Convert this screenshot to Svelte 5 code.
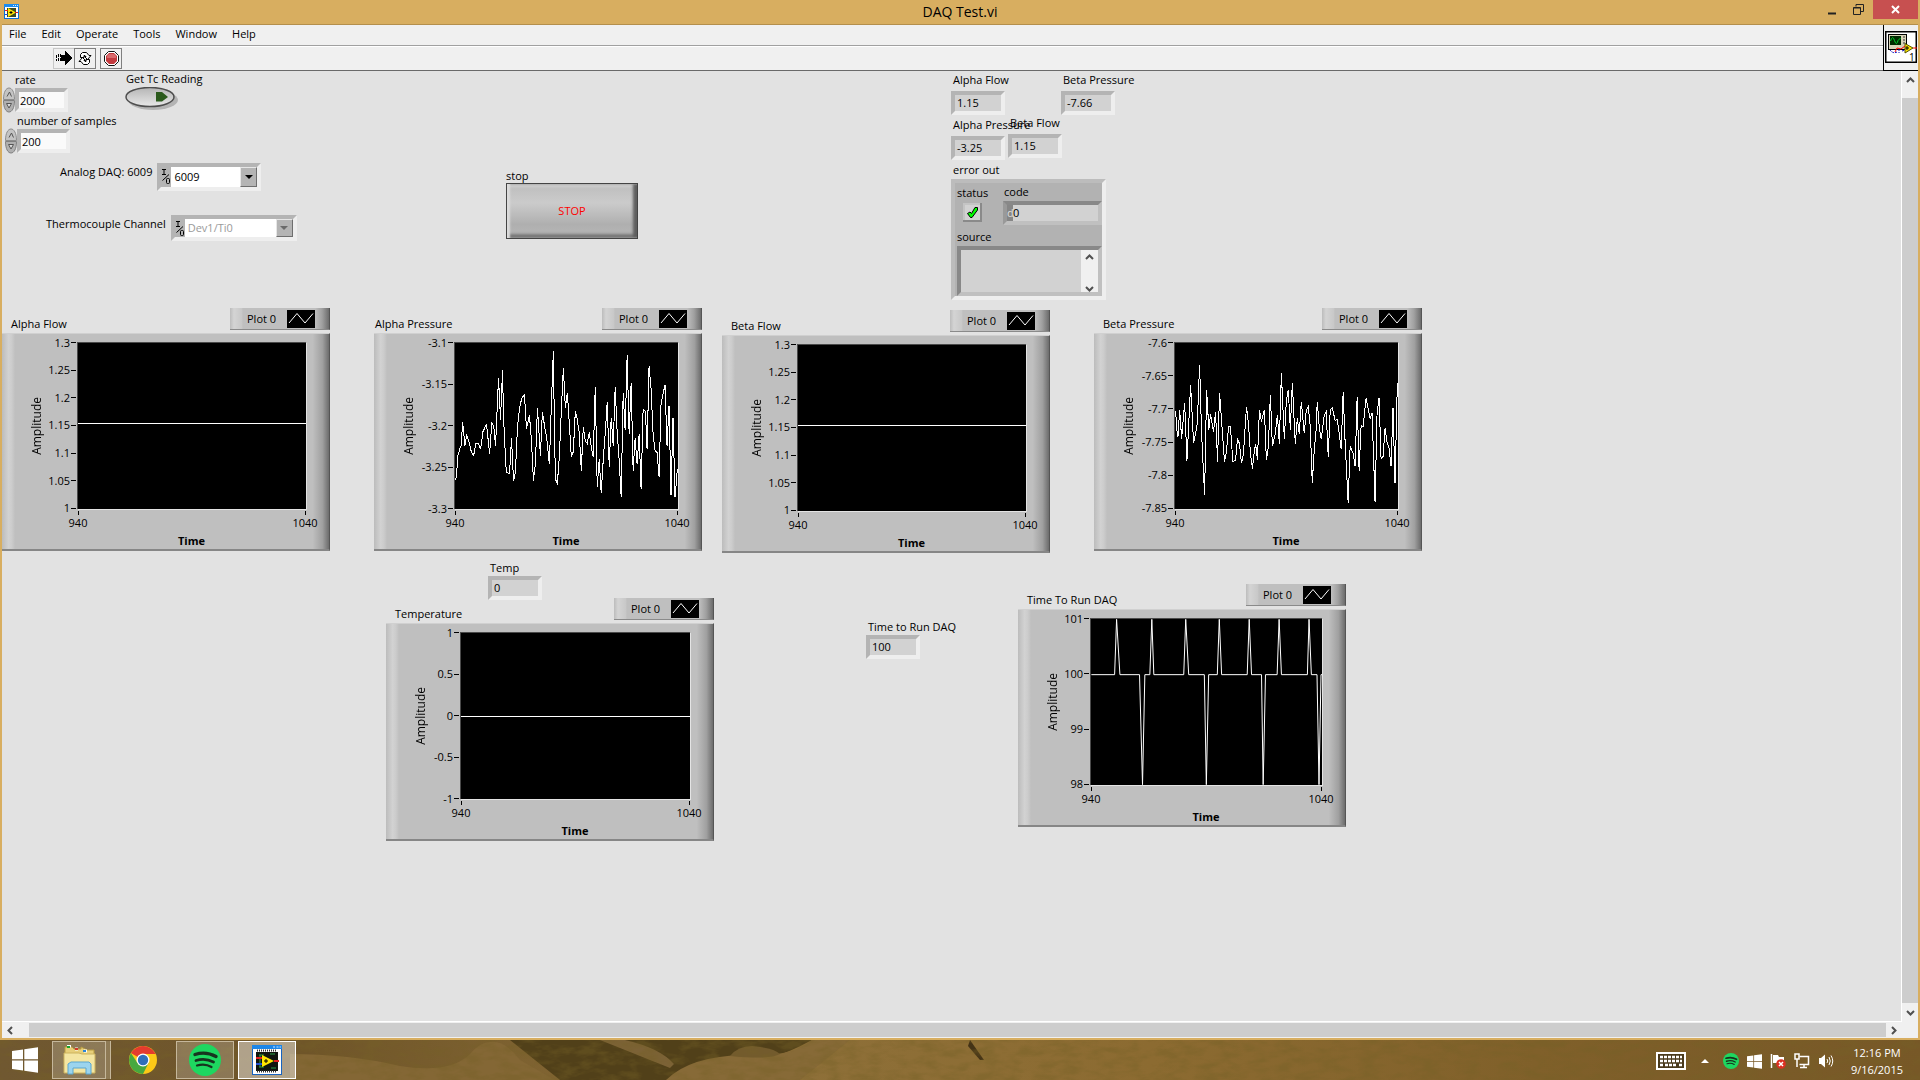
<script>
    const menus = ["File", "Edit", "Operate", "Tools", "Window", "Help"];

    let rate = "2000";
    let samples = "200";
    let analog = "6009";
    let thermocouple = "Dev1/Ti0";

    // positions are front panel coordinates
    const indicators = [
        { id: "alphaFlow", name: "Alpha Flow", value: "1.15", x: 949, y: 1 },
        { id: "betaPressure", name: "Beta Pressure", value: "-7.66", x: 1059, y: 1 },
        { id: "alphaPressure", name: "Alpha Pressure", value: "-3.25", x: 949, y: 46 },
        { id: "betaFlow", name: "Beta Flow", value: "1.15", x: 1006, y: 44 },
        { id: "temp", name: "Temp", value: "0", x: 486, y: 489, tight: true },
        { id: "timeToRun", name: "Time to Run DAQ", value: "100", x: 864, y: 548, tight: true }
    ];

    const flat = "0,243 684,243";

    const alphaPressure = "256,542 259,520 263,465 269,445 272,440 277,367 284,437 289,403 296,425 303,455 310,467 317,430 325,430 331,448 338,395 344,382 349,373 358,461 365,367 371,382 376,437 385,232 391,358 397,208 400,350 404,430 406,490 410,518 418,522 424,415 430,542 434,530 437,490 442,380 448,325 455,293 463,283 469,385 478,346 484,420 490,542 496,490 502,322 511,467 517,334 523,375 530,415 538,493 544,310 550,151 552,300 556,538 562,550 568,470 574,330 580,202 586,322 592,277 598,370 604,472 610,455 616,334 622,358 628,400 634,512 640,380 646,422 652,430 658,397 664,440 670,472 676,259 682,562 688,478 694,580 700,480 706,400 712,304 718,500 724,353 730,437 736,259 742,400 748,480 754,592 760,277 766,391 772,163 778,403 784,247 790,512 796,415 802,493 808,403 814,569 820,328 827,334 832,448 838,196 844,265 850,400 856,452 862,457 868,530 874,310 880,280 886,254 892,437 898,316 904,586 910,352 916,592 919,560 923,508";

    const betaPressure = "256,331 259,385 263,410 268,328 274,416 283,307 290,482 301,253 310,430 316,400 321,370 328,193 334,400 343,586 349,268 356,388 361,343 370,394 376,334 382,485 388,277 394,360 403,485 409,455 415,380 421,380 428,485 436,481 442,418 448,430 454,490 460,460 469,319 475,370 481,460 487,506 493,450 497,433 502,481 508,328 514,364 523,328 529,481 535,440 541,283 547,439 556,400 562,343 568,433 574,217 580,350 583,416 589,300 595,268 601,388 607,247 616,433 622,355 628,403 634,304 643,400 649,330 655,319 661,380 667,550 673,450 678,400 682,304 688,380 694,418 703,345 709,334 715,470 721,330 727,322 736,361 742,358 748,400 754,448 760,274 766,430 775,610 781,439 790,460 796,499 802,290 808,512 814,376 820,379 829,292 835,325 841,355 847,337 856,607 862,340 868,292 874,475 880,470 886,385 892,425 898,445 904,499 910,322 916,550 920,380 923,247";

    const runTime = "243,313 313,313 319,146 329,313 388,313 397,645 404,313 419,313 425,146 431,313 521,313 527,146 536,313 583,313 589,645 596,313 622,313 628,146 635,313 712,313 718,146 725,313 755,313 760,645 767,313 802,313 808,146 815,313 893,313 898,146 905,313 922,313 928,645 934,313 937,313";

    const charts = [
        { name: "Alpha Flow", x: 0, y: 237, inset: 9, left: 75, width: 229, ticks: ["1.3", "1.25", "1.2", "1.15", "1.1", "1.05", "1"], box: "0 0 684 501", points: flat },
        { name: "Alpha Pressure", x: 372, y: 237, inset: 1, left: 80, width: 224, ticks: ["-3.1", "-3.15", "-3.2", "-3.25", "-3.3"], box: "254 127 671 501", points: alphaPressure },
        { name: "Beta Flow", x: 720, y: 239, inset: 9, left: 75, width: 229, ticks: ["1.3", "1.25", "1.2", "1.15", "1.1", "1.05", "1"], box: "0 0 684 501", points: flat },
        { name: "Beta Pressure", x: 1092, y: 237, inset: 9, left: 80, width: 224, ticks: ["-7.6", "-7.65", "-7.7", "-7.75", "-7.8", "-7.85"], box: "254 127 671 501", points: betaPressure },
        { name: "Temperature", x: 384, y: 527, inset: 9, left: 74, width: 230, ticks: ["1", "0.5", "0", "-0.5", "-1"], box: "0 0 690 501", points: "0,252 690,252" },
        { name: "Time To Run DAQ", x: 1016, y: 513, inset: 9, left: 72, width: 232, ticks: ["101", "100", "99", "98"], box: "242 145 695 501", points: runTime }
    ];
</script>

{#snippet up()}
    <svg width="9" height="6" viewBox="0 0 9 6"><path d="M1 5 L4.5 1.5 L8 5" fill="none" stroke="#505050" stroke-width="2" /></svg>
{/snippet}

{#snippet down()}
    <svg width="9" height="6" viewBox="0 0 9 6"><path d="M1 1 L4.5 4.5 L8 1" fill="none" stroke="#505050" stroke-width="2" /></svg>
{/snippet}

{#snippet spinner()}
    <svg class="spin" width="12" height="26" viewBox="0 0 12 26">
        <path d="M0.5 12.5 C0.5 5 3 1 6 1 S11.5 5 11.5 12.5 Z" fill="#c4c4c4" stroke="#8d8d8d" />
        <path d="M0.5 13.5 C0.5 21 3 25 6 25 S11.5 21 11.5 13.5 Z" fill="#b0b0b0" stroke="#808080" />
        <path d="M4 9.5 L6.5 5 L8.5 9.5" fill="none" stroke="#555" />
        <path d="M3.5 16.5 H8.5 L6 21 Z" fill="#ddd" stroke="#555" />
    </svg>
{/snippet}

{#snippet io()}
    <svg class="io" width="10" height="20" viewBox="0 0 10 20">
        <path d="M1 2.5 H5 M3 2.5 V7.5 M1 7.5 H5 M1.5 13.5 L8 7.5" fill="none" stroke="#000" />
        <rect x="5.5" y="11.5" width="3" height="5" rx="1" fill="none" stroke="#000" />
    </svg>
{/snippet}

{#snippet spotify(size)}
    <svg width={size} height={size} viewBox="0 0 32 32">
        <circle cx="16" cy="16" r="16" fill="#1ed760" />
        <path d="M6 10.500 Q17 7 27 12.500" fill="none" stroke="#17331f" stroke-width="3.400" stroke-linecap="round" />
        <path d="M7 16.500 Q16 13.500 24.500 18" fill="none" stroke="#17331f" stroke-width="2.800" stroke-linecap="round" />
        <path d="M8 21.500 Q16 19 22.500 23" fill="none" stroke="#17331f" stroke-width="2.200" stroke-linecap="round" />
    </svg>
{/snippet}

{#snippet windows(size)}
    <svg width={size} height={size} viewBox="0 0 26 26">
        <path d="M0 4 L11 2.500 V12.300 H0 Z M12.300 2.300 L26 0.300 V12.300 H12.300 Z M0 13.500 H11 V23.500 L0 22 Z M12.300 13.500 H26 V25.700 L12.300 23.700 Z" fill="#fff" />
    </svg>
{/snippet}

{#snippet labview(size)}
    <svg width={size} height={size} viewBox="0 0 30 30">
        <rect x="0.500" y="0.500" width="29" height="29" fill="#fff" stroke="#1763c0" />
        <rect x="0" y="0" width="30" height="4" fill="#1c86e8" />
        <path d="M21 2 H23 M24.500 2 H26.500 M27.500 2 H29" stroke="#cfe6ff" />
        <rect x="4" y="7" width="22" height="19" fill="#10150f" />
        <path d="M5 5.500 H25 M5 26.500 H25" stroke="#333" stroke-width="2" stroke-dasharray="1 1" />
        <path d="M7 10 H12 M18 9 H23 M7 22 H12 M19 23 H24 M8 10 V22" fill="none" stroke="#2aa148" />
        <path d="M10 10 L22 16 L10 22 Z" fill="#ffe500" />
        <path d="M14 14 V18 M12 16 H16" stroke="#000" />
        <path d="M4 13 H10 M22 16 H27" stroke="#e02020" stroke-width="2" />
        <path d="M4 19 H10" stroke="#2050d0" stroke-width="2" />
    </svg>
{/snippet}

<!-- title bar size, where the diagram symbol fills the whole icon -->
{#snippet viIcon()}
    <svg width="15" height="15" viewBox="0 0 15 15">
        <rect x="0.500" y="0.500" width="14" height="14" fill="#fff" stroke="#0a6fd6" />
        <rect width="15" height="3" fill="#1a8cf0" />
        <path d="M9 1.500 H14" stroke="#d6ecff" stroke-dasharray="1 1" />
        <rect x="3" y="4" width="9" height="9" fill="#3a4a22" />
        <path d="M4 4 L12 8.500 L4 13 Z" fill="#ffe500" />
        <path d="M7 7 V10 M5.500 8.500 H8.500" stroke="#000" />
        <path d="M1 6.500 H4 M11 8.500 H14" stroke="#e02020" />
        <path d="M1 10.500 H4" stroke="#2050d0" />
    </svg>
{/snippet}

<div class="desktop">
    <div class="window">
        <header class="title">
            <span class="appicon">{@render viIcon()}</span>
            <h1>DAQ Test.vi</h1>
            <div class="winbtns">
                <button aria-label="Minimize"><svg width="10" height="12" viewBox="0 0 10 12"><path d="M1 9.500 H9" stroke="#222" stroke-width="2" /></svg></button>
                <button aria-label="Restore"><svg width="11" height="11" viewBox="0 0 11 11"><path d="M3 2.500 V0.500 H10.500 V7.500 H8" fill="none" stroke="#222" /><path d="M0.500 3.500 H7.500 V10.500 H0.500 Z M0.500 4 H7.500" fill="none" stroke="#222" /></svg></button>
                <button class="close" aria-label="Close"><svg width="9" height="9" viewBox="0 0 9 9"><path d="M1 1 L8 8 M8 1 L1 8" stroke="#fff" stroke-width="2" /></svg></button>
            </div>
        </header>

        <div class="body">
            <div class="top">
                <div class="bars">
                    <nav class="menu">
                        {#each menus as m}<button>{m}</button>{/each}
                    </nav>
                    <div class="tools">
                        <button class="run" aria-label="Run">
                            <svg width="16" height="14" viewBox="0 0 16 14" shape-rendering="crispEdges"><path d="M0.500 4 V10 M2.500 3 V11 M4.500 3 V11" stroke="#000" stroke-dasharray="3 1" /><path d="M5 4 H9 V0 L16 7 L9 14 V10 H5 Z" fill="#000" /></svg>
                        </button>
                        <button aria-label="Run continuously">
                            <svg width="16" height="15" viewBox="0 0 16 15">
                                <path d="M3.500 6.500 V3.500 L5.500 1.500 H9.500 L12 4.500 H14 L10.500 8.500 L7.500 5.500 H9 L8 4.500 H7 V6.500 Z" fill="#fff" stroke="#000" />
                                <path d="M3.500 6.500 V3.500 L5.500 1.500 H9.500 L12 4.500 H14 L10.500 8.500 L7.500 5.500 H9 L8 4.500 H7 V6.500 Z" fill="#fff" stroke="#000" transform="rotate(180 8 7.500)" />
                            </svg>
                        </button>
                        <button class="abort" aria-label="Abort execution">
                            <svg width="15" height="15" viewBox="0 0 15 15"><path d="M4.500 0.500 H10.500 L14.500 4.500 V10.500 L10.500 14.500 H4.500 L0.500 10.500 V4.500 Z" fill="#fff" stroke="#111" /><path d="M5 2 H10 L13 5 V10 L10 13 H5 L2 10 V5 Z" fill="#c33a3f" /><path d="M5 3 H10 L12 5 V7 H3 V5 Z" fill="#d9696c" /></svg>
                        </button>
                    </div>
                </div>
                <div class="pane">
                    <svg width="32" height="32" viewBox="0 0 32 32">
                        <rect x="0.500" y="0.500" width="31" height="31" fill="#fff" stroke="#000" stroke-width="2" />
                        <rect x="3.500" y="3.500" width="18" height="15" fill="#d8d4b8" stroke="#000" />
                        <rect x="5" y="5" width="11" height="9" fill="#002b00" />
                        <path d="M5.500 10 Q7.500 3.500 9.500 9.500 T13 9.500 L15.500 7" fill="none" stroke="#00d02a" />
                        <path d="M18 6 H20 M18 9 H20 M18 12 H20" stroke="#333" />
                        <path d="M20 12.500 L28 17 L20 22 Z" fill="#ffe600" stroke="#555500" />
                        <path d="M22 15 V19 M20.500 17 H24" stroke="#000" />
                        <path d="M5 19 Q8 23 12 21 M14 18 V22 M17 20 L20 19" fill="none" stroke="#1010c0" stroke-dasharray="2 1" />
                        <path d="M10 21 L12 17 L16 18 L20 15 M28 17 H32" fill="none" stroke="#f00" />
                        <text x="24" y="30" font-size="10">1</text>
                    </svg>
                </div>
            </div>

            <div class="view">
                <main class="panel">
                    <div class="item num" style="left: 1px; top: 1px">
                        <label for="rate">rate</label>
                        <div class="row">{@render spinner()}<input id="rate" class="sunk" bind:value={rate} /></div>
                    </div>
                    <div class="item num" style="left: 3px; top: 42px">
                        <label for="samples">number of samples</label>
                        <div class="row">{@render spinner()}<input id="samples" class="sunk" bind:value={samples} /></div>
                    </div>

                    <div class="item" style="left: 122px; top: 0px">
                        <label for="getTc">Get Tc Reading</label>
                        <button id="getTc" class="oval">
                            <svg width="54" height="24" viewBox="0 0 54 24">
                                <defs><linearGradient id="ov" x2="0" y2="1"><stop offset="0" stop-color="#b5b5b5" /><stop offset="1" stop-color="#e8e8e8" /></linearGradient></defs>
                                <ellipse cx="29" cy="13" rx="25" ry="10" fill="#b4b4b4" />
                                <ellipse cx="26" cy="10" rx="24" ry="9.500" fill="url(#ov)" stroke="#4e4e4e" stroke-width="1.500" />
                                <path d="M32 5 H38 L44 10 L38 14.500 H32 Z" fill="#2b5a1c" />
                            </svg>
                        </button>
                    </div>

                    <div class="item side" style="left: 56px; top: 93px">
                        <label for="analog">Analog DAQ: 6009</label>
                        <div class="combo sunk">
                            {@render io()}
                            <select id="analog" bind:value={analog}><option>6009</option></select>
                            <span class="drop"></span>
                        </div>
                    </div>
                    <div class="item side wide" style="left: 42px; top: 145px">
                        <label for="thermo">Thermocouple Channel</label>
                        <div class="combo sunk">
                            {@render io()}
                            <select id="thermo" disabled bind:value={thermocouple}><option>Dev1/Ti0</option></select>
                            <span class="drop off"></span>
                        </div>
                    </div>

                    <div class="item stopbox" style="left: 504px; top: 97px">
                        <label for="stop">stop</label>
                        <button id="stop" class="stop">STOP</button>
                    </div>

                    {#each indicators as ind}
                        <div class="item" class:tight={ind.tight} style="left: {ind.x}px; top: {ind.y}px">
                            <label for={ind.id}>{ind.name}</label>
                            <output id={ind.id} class="sunk">{ind.value}</output>
                        </div>
                    {/each}

                    <section class="item" style="left: 949px; top: 91px">
                        <h2>error out</h2>
                        <div class="cluster">
                            <div class="errrow">
                                <div class="status">
                                    <span>status</span>
                                    <svg class="led" width="19" height="19" viewBox="0 0 19 19">
                                        <path d="M4.500 10.500 L7 9 L8.500 10.500 L12 4.500 H14.500 V7 L9 14.500 H7.500 Z" fill="#0f0" stroke="#000" />
                                    </svg>
                                </div>
                                <div class="code">
                                    <label for="code">code</label>
                                    <div class="sunk codebox"><i>d</i><output id="code">0</output></div>
                                </div>
                            </div>
                            <label for="source">source</label>
                            <div class="sunk source">
                                <textarea id="source" readonly></textarea>
                                <div class="srcscroll">{@render up()}{@render down()}</div>
                            </div>
                        </div>
                    </section>

                    {#each charts as c}
                        <figure class="item chart" style="left: {c.x}px; top: {c.y}px">
                            <figcaption>
                                <span style="padding-left: {c.inset}px">{c.name}</span>
                                <div class="legend">
                                    Plot 0
                                    <svg width="28" height="18" viewBox="0 0 28 18"><rect width="28" height="18" fill="#000" /><path d="M2 13 L10 3.500 L18 13 L26 3.500" fill="none" stroke="#fff" /></svg>
                                </div>
                            </figcaption>
                            <div class="frame" style="grid-template-columns: {c.left}px {c.width}px">
                                <div class="yaxis">
                                    <span class="amp">Amplitude</span>
                                    <div class="ticks">
                                        {#each c.ticks as t}<span>{t}</span>{/each}
                                    </div>
                                </div>
                                <svg class="plot" viewBox={c.box} preserveAspectRatio="none" shape-rendering="crispEdges">
                                    <polyline points={c.points} fill="none" stroke="#fff" vector-effect="non-scaling-stroke" />
                                </svg>
                                <div class="xaxis"><span>940</span><span>1040</span></div>
                                <b>Time</b>
                            </div>
                        </figure>
                    {/each}
                </main>
                <div class="vscroll">
                    <button aria-label="Scroll up">{@render up()}</button>
                    <div class="thumb"></div>
                    <button aria-label="Scroll down">{@render down()}</button>
                </div>
            </div>

            <div class="hscroll">
                <button aria-label="Scroll left"><svg width="6" height="9" viewBox="0 0 6 9"><path d="M5 1 L1.500 4.500 L5 8" fill="none" stroke="#505050" stroke-width="2" /></svg></button>
                <div class="thumb"></div>
                <button aria-label="Scroll right"><svg width="6" height="9" viewBox="0 0 6 9"><path d="M1 1 L4.500 4.500 L1 8" fill="none" stroke="#505050" stroke-width="2" /></svg></button>
            </div>
        </div>
    </div>

    <footer class="taskbar">
        <svg class="wall" viewBox="0 0 1920 40" preserveAspectRatio="none">
            <defs>
                <filter id="grain" x="0" y="0" width="100%" height="100%">
                    <feTurbulence type="fractalNoise" baseFrequency="0.05 0.12" numOctaves="4" seed="4" />
                    <feColorMatrix values="0 0 0 0 0.18  0 0 0 0 0.12  0 0 0 0 0.02  3 0 0 0 -1.2" />
                </filter>
                <linearGradient id="sand">
                    <stop offset="0" stop-color="#705831" />
                    <stop offset="0.16" stop-color="#6f5529" />
                    <stop offset="0.4" stop-color="#8e7039" />
                    <stop offset="0.6" stop-color="#8c6b31" />
                    <stop offset="0.8" stop-color="#80602a" />
                    <stop offset="1" stop-color="#775827" />
                </linearGradient>
            </defs>
            <rect width="1920" height="40" fill="url(#sand)" />
            <path d="M510 0 H812 Q790 12 770 18 L690 40 H560 Z" fill="#514019" />
            <path d="M290 40 V14 Q350 14 400 26 Q450 34 470 14 Q480 2 490 2 Q505 0 520 20 L555 40 Z" fill="#846735" />
            <path d="M600 0 H625 Q660 8 674 24 L670 28 Z" fill="#7c6236" />
            <path d="M666 40 Q690 16 745 15 Q790 18 812 0 H850 L800 40 Z" fill="#876a37" />
            <path d="M730 16 Q738 6 752 6 Q774 8 780 14 Q770 20 730 16 Z" fill="#735b2d" />
            <path d="M970 0 L984 20 L980 20 L968 6 Z" fill="#443316" />
            <rect width="1920" height="40" filter="url(#grain)" opacity="0.4" />
        </svg>
        <button class="start" aria-label="Start">{@render windows(26)}</button>
        <button class="task stack" aria-label="File Explorer">
            <svg width="33" height="30" viewBox="0 0 33 30">
                <path d="M2 4 V2 H9 L11 4 H18 V2 L24 5 H31 V27 H2 Z" fill="#e7cf79" stroke="#b99d43" />
                <path d="M4 1 H8 M12 4 H15 M21 6 H24" stroke="#fff" stroke-width="3" />
                <path d="M4 2 H7" stroke="#1aa32c" stroke-width="2" /><path d="M12 4 H15" stroke="#d03a2a" stroke-width="2" /><path d="M20 6 H23" stroke="#2a86d8" stroke-width="2" />
                <path d="M1 8 H16 L19 9 H32 V28 H1 Z" fill="#f4e6a2" stroke="#ccb35f" />
                <path d="M5 29 V19 L8 17 H26 L28 19 V29 H23 V23 H10 V29 Z" fill="#9bd4ee" stroke="#5aa6cf" />
            </svg>
        </button>
        <button class="task plain" aria-label="Google Chrome">
            <svg width="28" height="28" viewBox="0 0 28 28">
                <circle cx="14" cy="14" r="14" fill="#fbc917" />
                <path d="M14 14 L1.900 7 A14 14 0 0 1 26.100 7 L26.500 8 H14 Z" fill="#e33b2e" />
                <path d="M1.900 7 A14 14 0 0 0 14 28 L19.500 17 L14 14 L8.500 17 Z" fill="#47a83f" />
                <circle cx="14" cy="14" r="6.500" fill="#fff" /><circle cx="14" cy="14" r="5.200" fill="#2f6fba" />
            </svg>
        </button>
        <button class="task" aria-label="Spotify">{@render spotify(32)}</button>
        <button class="task active" aria-label="LabVIEW">{@render labview(30)}</button>

        <div class="tray">
            <svg width="30" height="18" viewBox="0 0 30 18"><rect x="1" y="1" width="28" height="16" fill="#4a3a1c" stroke="#fff" stroke-width="2" /><path d="M4 5 H26 M4 9 H26 M4 13 H7 M9 13 H21 M23 13 H26" stroke="#fff" stroke-width="2.500" stroke-dasharray="3 1" /></svg>
            <svg class="caret" width="8" height="4" viewBox="0 0 8 4"><path d="M0 4 L4 0 L8 4 Z" fill="#fff" /></svg>
            {@render spotify(16)}
            {@render windows(15)}
            <svg width="16" height="16" viewBox="0 0 16 16"><path d="M1.500 1 V15" stroke="#fff" stroke-width="1.500" /><path d="M3 2 H8 L9 4 H14 V10 H3 Z" fill="#fff" /><circle cx="11" cy="11" r="4.800" fill="#dc3022" /><path d="M9 9 L13 13 M13 9 L9 13" stroke="#fff" stroke-width="1.500" /></svg>
            <svg width="16" height="16" viewBox="0 0 16 16"><path d="M5.500 3.500 H14.500 V11.500 H5.500 M10 12 V14 M6 14.500 H13 M3 6 V14" fill="none" stroke="#fff" stroke-width="1.500" /><rect x="1" y="1" width="4" height="5" fill="none" stroke="#fff" stroke-width="1.500" /></svg>
            <svg width="16" height="16" viewBox="0 0 16 16"><path d="M1 5 H3 L7 1.500 V14.500 L3 11 H1 Z" fill="#fff" /><path d="M9 6 Q10.500 8 9 10 M11 4 Q13.500 8 11 12 M13 2.500 Q16.500 8 13 13.500" fill="none" stroke="#fff" /></svg>
            <div class="clock"><span>12:16 PM</span><span>9/16/2015</span></div>
        </div>
    </footer>
</div>

<style>
    .desktop {
        height: 100vh;
        display: flex;
        flex-direction: column;
        overflow: hidden;
        font: 11px/16px "Open Sans", "Noto Sans", sans-serif;
        color: #000;
    }
    .desktop :global(svg) {
        display: block;
        flex: none;
    }
    button {
        border: 0;
        padding: 0;
        margin: 0;
        background: none;
        font: inherit;
        color: inherit;
        display: flex;
        align-items: center;
        justify-content: center;
    }
    input, select, textarea {
        font: inherit;
        color: inherit;
        box-sizing: border-box;
        margin: 0;
        border-radius: 0;
    }
    h1, h2, figure {
        margin: 0;
        font-weight: normal;
    }

    .window {
        flex: 1;
        min-height: 0;
        display: flex;
        flex-direction: column;
        background: #d8ae60;
        padding: 0 2px 2px;
    }
    .title {
        height: 24px;
        display: grid;
        grid-template-columns: 1fr auto 1fr;
        align-items: start;
        border-bottom: 1px solid #b48f4c;
    }
    .appicon {
        padding: 4px 2px;
    }
    h1 {
        font-size: 14px;
        line-height: 24px;
    }
    .winbtns {
        display: flex;
        justify-content: flex-end;
        height: 19px;
    }
    .winbtns button {
        width: 26px;
    }
    .winbtns .close {
        width: 45px;
        margin-left: 2px;
        background: #c75050;
    }

    .body {
        flex: 1;
        min-height: 0;
        display: flex;
        flex-direction: column;
        background: #f0f0f0;
    }
    .top {
        display: flex;
        border-bottom: 1px solid #696969;
    }
    .bars {
        flex: 1;
    }
    .menu {
        display: flex;
        gap: 1px;
        height: 20px;
        border-bottom: 1px solid #a0a0a0;
        box-shadow: 0 1px 0 #fff;
    }
    .menu button {
        padding: 0 7px;
        height: 18px;
    }
    .tools {
        display: flex;
        height: 24px;
        padding-left: 51px;
        align-items: center;
        box-sizing: border-box;
    }
    .tools button {
        width: 22px;
        height: 21px;
        box-sizing: border-box;
        border: 1px solid #808080;
    }
    .tools .run {
        width: 21px;
        border: 1px solid #c8c8c8;
        border-right: 0;
    }
    .tools .abort {
        margin-left: 4px;
    }
    .pane {
        border-left: 1px solid #000;
        border-bottom: 1px solid #000;
        margin-bottom: -1px;
        padding: 6px 1px;
        width: 32px;
    }

    .view {
        flex: 1;
        min-height: 0;
        display: flex;
    }
    .panel {
        flex: 1;
        position: relative;
        overflow: hidden;
        background: #e2e2e2;
        border-right: 1px solid #fff;
        border-bottom: 1px solid #fff;
    }
    .vscroll {
        width: 16px;
        display: flex;
        flex-direction: column;
    }
    .vscroll .thumb {
        flex: 1;
        margin: 9px 0 1px;
        background: #cdcdcd;
    }
    .vscroll button {
        height: 18px;
    }
    .hscroll {
        height: 16px;
        display: flex;
        padding-right: 16px;
    }
    .hscroll .thumb {
        flex: 1;
        margin: 1px 0 1px 11px;
        background: #cdcdcd;
    }
    .hscroll button {
        width: 16px;
    }

    /* front panel objects */
    .item {
        position: absolute;
        display: flex;
        flex-direction: column;
        gap: 3px;
        align-items: flex-start;
        white-space: nowrap;
    }
    .item > label, .item > h2 {
        padding-left: 2px;
        font-size: 11px;
        line-height: 16px;
    }
    .item.tight {
        gap: 0;
    }
    .sunk {
        box-sizing: border-box;
        border: 4px solid;
        border-color: #b4b4b4 #eeeeee #eeeeee #b4b4b4;
        background: #d2d2d2;
    }
    output.sunk {
        width: 54px;
        height: 24px;
        padding-left: 2px;
    }
    .row {
        display: flex;
        align-items: center;
        margin-top: -4px;
    }
    .num > label {
        padding-left: 12px;
    }
    .num input {
        width: 53px;
        height: 24px;
        padding: 0 1px;
        background: #fafafa;
    }
    .oval {
        margin-top: -3px;
    }
    .side {
        flex-direction: row;
        gap: 5px;
    }
    .combo {
        display: flex;
        width: 104px;
        height: 28px;
        margin-top: -1px;
        background: #b4b4b4;
        position: relative;
    }
    .side.wide .combo {
        width: 126px;
        height: 26px;
    }
    .combo select {
        flex: 1;
        min-width: 0;
        appearance: none;
        border: 0;
        padding: 0 3px;
        background: #fff;
        opacity: 1;
    }
    .combo select:disabled {
        color: #9a9a9a;
    }
    .drop {
        position: absolute;
        right: 0;
        top: 0;
        bottom: 0;
        width: 17px;
        box-sizing: border-box;
        background: #b4b4b4;
        border: 1px solid;
        border-color: #e6e6e6 #6e6e6e #6e6e6e #e6e6e6;
        pointer-events: none;
        display: flex;
        align-items: center;
        justify-content: center;
    }
    .drop::after {
        content: "";
        border: 4px solid transparent;
        border-top-color: #000;
        border-bottom: 0;
    }
    .drop.off::after {
        border-top-color: #6a6a6a;
    }
    .stopbox {
        gap: 0;
    }
    .stopbox > label {
        padding-left: 0;
    }
    .stop {
        width: 132px;
        height: 56px;
        margin-top: -1px;
        box-sizing: border-box;
        border: 1px solid #444;
        color: #f00;
        background: linear-gradient(#bdbdbd, #cbcbcb 35%, #afafaf 75%, #b8b8b8);
        box-shadow: inset 3px 0 2px #dcdcdc, inset -4px 0 3px #5e5e5e, inset 0 3px 2px #d4d4d4, inset 0 -4px 3px #777;
    }

    .cluster {
        width: 155px;
        height: 121px;
        margin-top: -2px;
        box-sizing: border-box;
        border: 4px solid;
        border-color: #bcbcbc #eeeeee #eeeeee #bcbcbc;
        background: #b2b2b2;
        padding: 0 0 0 2px;
    }
    .errrow {
        display: flex;
        height: 46px;
    }
    .status {
        width: 46px;
        padding-top: 2px;
    }
    .led {
        margin-left: 6px;
        margin-top: 2px;
        box-sizing: border-box;
        background: #d2d2d2;
        box-shadow: inset -2px -2px 0 #8a8a8a, inset 2px 2px 0 #c4c4c4;
    }
    .code {
        flex: 1;
    }
    .code label {
        padding: 1px 0 0 1px;
        display: block;
    }
    .codebox {
        display: flex;
        height: 24px;
        margin-top: 1px;
        border-color: #888 #c0c0c0 #c0c0c0 #999;
    }
    .codebox i {
        font-style: normal;
        width: 6px;
        color: #ddd;
        background: #868686;
    }
    .source {
        display: flex;
        height: 50px;
        margin-top: 1px;
        border-color: #888 #c0c0c0 #c0c0c0 #888;
    }
    .source textarea {
        flex: 1;
        min-width: 0;
        border: 0;
        padding: 0;
        resize: none;
        background: transparent;
    }
    .srcscroll {
        width: 17px;
        background: #f0f0f0;
        display: flex;
        flex-direction: column;
        justify-content: space-between;
        align-items: center;
        padding: 4px 0 0;
    }

    .chart {
        width: 328px;
        gap: 0;
    }
    figcaption {
        width: 100%;
        height: 25px;
        display: flex;
        justify-content: space-between;
    }
    figcaption > span {
        padding-top: 8px;
    }
    .legend {
        width: 100px;
        height: 22px;
        box-sizing: border-box;
        padding: 0 14px 0 17px;
        display: flex;
        align-items: center;
        justify-content: space-between;
        background: linear-gradient(90deg, #bcbcbc, #d4d4d4 4%, #c8c8c8 12%, #bfbfbf 13%, #bfbfbf 86%, #a0a0a0 93%, #6c6c6c);
        border-bottom: 1px solid #8a8a8a;
        border-right: 1px solid #555;
    }
    .frame {
        width: 100%;
        height: 218px;
        box-sizing: border-box;
        padding-top: 8px;
        display: grid;
        grid-template-rows: 167px 23px 16px;
        background: linear-gradient(90deg, #bcbcbc, #d2d2d2 2%, #cccccc 3%, #bfbfbf 4%, #bfbfbf 95%, #a0a0a0 98%, #6c6c6c);
        border-top: 1px solid #d0d0d0;
        border-bottom: 2px solid #868686;
        border-right: 1px solid #555;
    }
    .yaxis {
        display: flex;
        justify-content: space-between;
        align-items: center;
    }
    .amp {
        writing-mode: vertical-rl;
        transform: rotate(180deg);
        font-size: 12px;
        margin-left: 27px;
    }
    .ticks {
        align-self: stretch;
        display: flex;
        flex-direction: column;
        justify-content: space-between;
        align-items: flex-end;
        padding-right: 1px;
    }
    .ticks span {
        height: 1px;
        display: flex;
        align-items: center;
        gap: 1px;
    }
    .ticks span::after {
        content: "";
        width: 5px;
        height: 1px;
        background: #000;
    }
    .plot {
        width: 100%;
        height: 100%;
        box-sizing: border-box;
        background: #000;
        border-left: 1px solid #4a4a4a;
        border-top: 1px solid #4a4a4a;
        box-shadow: 1px 1px 0 #e4e4e4;
    }
    .xaxis {
        grid-column: 2;
        display: flex;
        justify-content: space-between;
    }
    .xaxis span {
        width: 2px;
        display: flex;
        flex-direction: column;
        align-items: center;
    }
    .xaxis span::before {
        content: "";
        flex: none;
        width: 1px;
        height: 4px;
        margin-top: 2px;
        background: #000;
    }
    .frame b {
        grid-column: 2;
        text-align: center;
        padding-top: 1px;
    }

    .taskbar {
        height: 40px;
        position: relative;
        display: flex;
        color: #fff;
        background: #7c602c;
        overflow: hidden;
    }
    .wall {
        position: absolute;
        width: 100%;
        height: 100%;
    }
    .taskbar button, .tray {
        position: relative;
    }
    .start {
        width: 50px;
        margin-right: 2px;
    }
    .task {
        width: 58px;
        height: 38px;
        margin: 1px 2px;
        box-sizing: border-box;
        border: 1px solid #c5b79b;
        background: rgba(255, 255, 255, 0.2);
    }
    .task.stack {
        width: 54px;
        margin: 1px 6px 1px 0;
        box-shadow: 4px 0 0 #8e7a55, 5px 0 0 #c5b79b;
    }
    .task.plain {
        border-color: transparent;
        background: none;
    }
    .task.active {
        border: 1px solid #fff;
        background: rgba(255, 255, 255, 0.45);
    }
    .tray {
        margin-left: auto;
        display: flex;
        align-items: center;
        gap: 8px;
        padding: 2px 17px 0 0;
    }
    .caret {
        margin: 0 6px 0 7px;
    }
    .clock {
        display: flex;
        flex-direction: column;
        align-items: center;
        margin-left: 9px;
        line-height: 17px;
    }
</style>
